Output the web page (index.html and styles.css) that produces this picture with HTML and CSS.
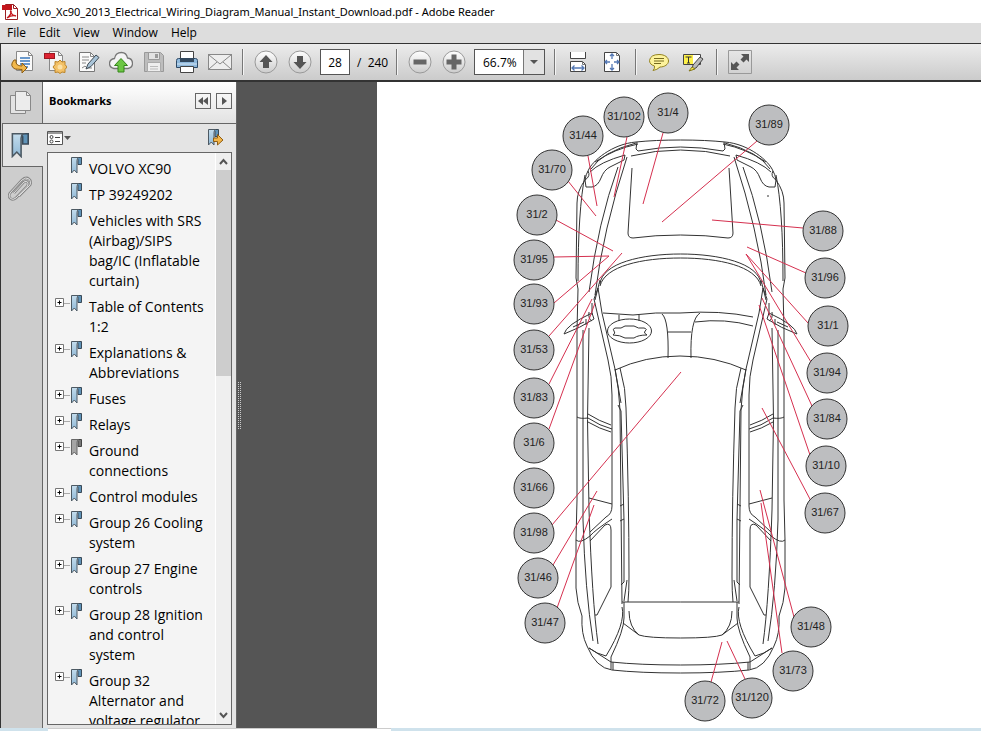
FILE: index.html
```html
<!DOCTYPE html>
<html lang="en">
<head>
  <meta charset="UTF-8">
  <title>Volvo_Xc90_2013_Electrical_Wiring_Diagram_Manual_Instant_Download.pdf - Adobe Reader</title>
  <meta name="viewport" content="width=device-width, initial-scale=1.0">
  <link rel="stylesheet" href="styles.css">
</head>
<body>
  <!-- shared shapes -->
  <svg class="defs" aria-hidden="true">
    <defs>
      <linearGradient id="blue" x1="0" y1="0" x2="0" y2="1"><stop offset="0" stop-color="#c4dded"/><stop offset="1" stop-color="#8fb8d6"/></linearGradient>
      <linearGradient id="round" x1="0" y1="0" x2="0" y2="1"><stop offset="0" stop-color="#fff"/><stop offset="1" stop-color="#ccc"/></linearGradient>
      <symbol id="mark" viewBox="0 0 12 17">
        <path d="M6.500 .5h5v7h-3.500v-5z" fill="#5f93b8" stroke="#3a4a58"/>
        <path d="M1.500 .5h7q-1.500 1-1.500 3v12.500l-2.700-3-2.800 3v-14z" fill="url(#blue)" stroke="#4c5963"/>
      </symbol>
      <symbol id="mark-gray" viewBox="0 0 12 17">
        <path d="M6.500 .5h5v7h-3.500v-5z" fill="#777" stroke="#444"/>
        <path d="M1.500 .5h7q-1.500 1-1.500 3v12.500l-2.700-3-2.800 3v-14z" fill="#a5a5a5" stroke="#666"/>
      </symbol>
    </defs>
  </svg>

  <header class="titlebar">
    <svg width="18" height="18" viewBox="0 0 18 18">
      <path d="M4.500 1.500h8l4 4v11h-12z" fill="#fff" stroke="#9a2024"/>
      <path d="M12.500 1.500v4h4" fill="none" stroke="#9a2024"/>
      <path d="M1 2h10v5H1z" fill="#c3161c"/>
      <path d="M6 15c3-2 5-6 4-7s-1 4 5 5c-3-1-6 0-9 2z" fill="none" stroke="#c3161c" stroke-width="1.300"/>
    </svg>
    <h1>Volvo_Xc90_2013_Electrical_Wiring_Diagram_Manual_Instant_Download.pdf - Adobe Reader</h1>
  </header>

  <nav class="menubar">
    <button>File</button>
    <button>Edit</button>
    <button>View</button>
    <button>Window</button>
    <button>Help</button>
  </nav>

  <div class="toolbar">
    <button aria-label="Open"><svg width="24" height="24" viewBox="0 0 24 24">
      <path d="M6.500 1.500h12l4 4v15h-16z" fill="#fafafa" stroke="#888"/><path d="M18.500 1.500v4h4" fill="none" stroke="#888"/>
      <path d="M10 8h10M10 11h10M10 14h10M10 17h8" stroke="#3b79bd" stroke-width="1.500"/>
      <path d="M4 10q-5 6 1 9l7 .5v3.500l5-5-5-5v3q-7 0-6-6z" fill="#f2b84b" stroke="#8c5d13"/></svg></button>
    <button aria-label="Create PDF"><svg width="24" height="24" viewBox="0 0 24 24">
      <path d="M6.500 1.500h9l4 4v15h-13z" fill="#f5f5f5" stroke="#888"/><path d="M15.500 1.500v4h4" fill="none" stroke="#888"/>
      <rect x="1.500" y="3.500" width="10" height="5" fill="#dc2332" stroke="#9c1820"/>
      <path d="M17 10l2 2 3-.5v3l2 2.500-2 2.500v3l-3-.5-2 1.500-2-1.500-3 .5v-3l-2-2.500 2-2.500v-3l3 .5z" fill="#f3c167" stroke="#bb8429"/><circle cx="17" cy="17" r="2.500" fill="#fbe0a5"/></svg></button>
    <button aria-label="Sign"><svg width="24" height="24" viewBox="0 0 24 24">
      <path d="M3.500 2.500h11l4 4v15h-15z" fill="#fafafa" stroke="#777"/><path d="M14.500 2.500v4h4" fill="none" stroke="#888"/>
      <path d="M6 7h7M6 10h7M6 13h4M6 18l3-2 2 2h5" fill="none" stroke="#888"/>
      <path d="M10 19l2-5 8-9 3 2.500-8 9z" fill="#a9c4d8" stroke="#3e4a54"/></svg></button>
    <button aria-label="Upload"><svg width="24" height="24" viewBox="0 0 24 24">
      <path d="M5 18.500q-4.500-1-4.500-5t5-5q1-6 7-6 5 0 6 5.500 5 .5 5 5.500 0 4-4.500 5z" fill="#f4f4f4" stroke="#777" stroke-width="1.300"/>
      <path d="M12 8.500l6.500 7h-3.500v6.500h-6v-6.500H5.500z" fill="#6cc644" stroke="#34851a"/></svg></button>
    <button aria-label="Save" disabled><svg width="24" height="24" viewBox="0 0 24 24">
      <path d="M2.500 2.500h16l3 3v16h-19z" fill="#bdbdbd" stroke="#999"/><path d="M6.500 2.500h11v7h-11z" fill="#e2e2e2" stroke="#999"/><path d="M13 4h3v4h-3z" fill="#999"/>
      <path d="M5.500 12.500h13v9h-13z" fill="#eee" stroke="#aaa"/><path d="M8 16.500h8M8 19h8" stroke="#bbb"/></svg></button>
    <button aria-label="Print"><svg width="24" height="24" viewBox="0 0 24 24">
      <path d="M5.500 1.500h13v9h-13z" fill="#fff" stroke="#444"/>
      <path d="M3.500 8.500h17q2 0 2 2v7h-21v-7q0-2 2-2z" fill="#8eb8dc" stroke="#2e4a66"/><path d="M5 8h14v4H5z" fill="#32485e"/>
      <path d="M2 14h20" stroke="#d5e7f5"/><path d="M5.500 16.500h13v6h-13z" fill="#fff" stroke="#444"/></svg></button>
    <button aria-label="E-mail"><svg width="26" height="24" viewBox="0 0 26 24">
      <rect x="1.500" y="4.500" width="23" height="15" fill="#eee" stroke="#888"/><path d="M2 5l11 9 11-9M2 19l8-7M24 19l-8-7" fill="none" stroke="#888"/></svg></button>
    <span class="sep"></span>
    <button class="wide" aria-label="Previous page"><svg width="24" height="24" viewBox="0 0 24 24">
      <circle cx="12" cy="12" r="11" fill="url(#round)" stroke="#999"/><path d="M12 5l6.500 7H15v6H9v-6H5.500z" fill="#555"/></svg></button>
    <button class="wide" aria-label="Next page"><svg width="24" height="24" viewBox="0 0 24 24">
      <circle cx="12" cy="12" r="11" fill="url(#round)" stroke="#999"/><path d="M12 19l6.500-7H15V6H9v6H5.500z" fill="#555"/></svg></button>
    <input class="page-number" type="text" value="28" aria-label="Page number">
    <span class="page-count">/&nbsp; 240</span>
    <span class="sep"></span>
    <button class="wide" aria-label="Zoom out"><svg width="24" height="24" viewBox="0 0 24 24">
      <circle cx="12" cy="12" r="11" fill="url(#round)" stroke="#999"/><path d="M5.500 9.500h13v5h-13z" fill="#666"/></svg></button>
    <button class="wide" aria-label="Zoom in"><svg width="24" height="24" viewBox="0 0 24 24">
      <circle cx="12" cy="12" r="11" fill="url(#round)" stroke="#999"/><path d="M9.500 4.500h5v5h5v5h-5v5h-5v-5h-5v-5h5z" fill="#666"/></svg></button>
    <div class="zoom">
      <select aria-label="Zoom"><option>66.7%</option></select>
      <span class="arrow"><svg width="8" height="4" viewBox="0 0 8 4"><path d="M0 0h8l-4 4z" fill="#555"/></svg></span>
    </div>
    <span class="sep gap"></span>
    <button class="wide" aria-label="Fit width"><svg width="20" height="22" viewBox="0 0 20 22">
      <path d="M2.500 1v6.500h15V1M2.500 20.500v-10h12l3 3v7z" fill="#fff" stroke="#444"/><path d="M14.500 10.500v3h3" fill="none" stroke="#777"/>
      <path d="M4 17h12M6.500 14.500L4 17l2.500 2.500M13.500 14.500L16 17l-2.500 2.500" fill="none" stroke="#5478b4" stroke-width="1.300"/></svg></button>
    <button class="wide" aria-label="Fit page"><svg width="20" height="22" viewBox="0 0 20 22">
      <path d="M2.500 1.500h12l3 3v16h-15z" fill="#fff" stroke="#444"/><path d="M14.500 1.500v3h3" fill="none" stroke="#777"/>
      <path d="M10 3v5M10 13v6M8 5l2-2 2 2M8 17l2 2 2-2M3 11h5M12 11h5M5 9l-2 2 2 2M15 9l2 2-2 2" fill="none" stroke="#5478b4" stroke-width="1.300"/></svg></button>
    <span class="sep"></span>
    <button class="wide" aria-label="Comment"><svg width="22" height="20" viewBox="0 0 22 20">
      <path d="M11 2.500c6 0 9.500 3 9.500 6.500s-4 6-8.500 6q-3 3-7 3.500 2-2 1.500-4.500-5-1.500-5-5.500 1-6 9.500-6z" fill="#fdf39c" stroke="#94831f"/>
      <path d="M6 6.500h10M6 9h10M6 11.500h7" stroke="#75691e"/></svg></button>
    <button class="wide" aria-label="Highlight text"><svg width="22" height="20" viewBox="0 0 22 20">
      <path d="M1.500 2.500h17v10h-17z" fill="#fff" stroke="#444"/><path d="M2 3h9v9H2z" fill="#fdf04a"/><path d="M3.500 5h6M6.500 5v6M5 11h3" stroke="#333"/>
      <path d="M10 17l1-4 7-8 3 2-7 9z" fill="#bbb" stroke="#444"/><path d="M7 19l3-4 3 2z" fill="#fdf04a" stroke="#84771c"/></svg></button>
    <span class="sep"></span>
    <button class="wide" aria-label="Read mode"><svg width="24" height="24" viewBox="0 0 24 24">
      <path d="M.5 .5h23v23H.5z" fill="none" stroke="#999"/>
      <path d="M13 4h8v8l-2.500-2.500-3 3-3-3 3-3zM11 20H3v-8l2.500 2.500 3-3 3 3-3 3z" fill="#555"/></svg></button>
  </div>

  <main>
    <aside class="tabs">
      <button class="tab" aria-label="Pages"><svg width="22" height="26" viewBox="0 0 22 26">
        <path d="M1.500 5.500h15v18h-15z" fill="#e3e3e3" stroke="#888"/><path d="M6.500 1.500h11l4 4v15h-15z" fill="#ececec" stroke="#888"/><path d="M17.500 1.500v4h4" fill="none" stroke="#888"/></svg></button>
      <button class="tab active" aria-label="Bookmarks"><svg width="19" height="25" viewBox="0 0 12 17" preserveAspectRatio="none"><use href="#mark"/></svg></button>
      <button class="tab" aria-label="Attachments"><svg width="24" height="26" viewBox="0 0 24 26">
        <path d="M7 17L17 6q2.500-1.500 3.500 0t0 4L9 22q-3 2.500-5.500.5T3 17L15 4q4-3.500 7-1t1 6L12 20" transform="translate(-1 1)" fill="none" stroke="#888" stroke-width="2.600"/>
        <path d="M7 17L17 6q2.500-1.500 3.500 0t0 4L9 22q-3 2.500-5.500.5T3 17L15 4q4-3.500 7-1t1 6L12 20" transform="translate(-1 1)" fill="none" stroke="#ddd"/></svg></button>
    </aside>

    <section class="panel">
      <div class="panel-head">
        <h2>Bookmarks</h2>
        <button aria-label="Collapse"><svg width="10" height="8" viewBox="0 0 10 8"><path d="M5 0v8L0 4zM10 0v8L5 4z" fill="#555"/></svg></button>
        <button aria-label="Next"><svg width="10" height="8" viewBox="0 0 10 8"><path d="M3 0v8l5-4z" fill="#555"/></svg></button>
      </div>
      <div class="panel-tools">
        <button aria-label="Options"><svg width="24" height="16" viewBox="0 0 24 16">
          <path d="M.5 1.500h15v13H.5z" fill="#fff" stroke="#555"/><path d="M1 2h14v2H1z" fill="#999"/><circle cx="4.500" cy="7" r="1.500" fill="none" stroke="#444"/><circle cx="4.500" cy="11.500" r="1.500" fill="none" stroke="#444"/><path d="M8 7.500h5M8 11.500h5" stroke="#444"/>
          <path d="M17 6h7l-3.500 4z" fill="#555"/></svg></button>
        <button aria-label="Find current bookmark"><svg width="17" height="18" viewBox="0 0 17 18">
          <use href="#mark" width="12" height="17"/><path d="M6.500 9h4V5.500L16 11l-5.500 5v-3.500h-4z" fill="#f2b54a" stroke="#8f5e14"/></svg></button>
      </div>
      <div class="tree">
        <ul id="bookmarkList"></ul>
        <div class="scroll">
          <svg width="15" height="17" viewBox="0 0 15 17"><path d="M4 11l3.500-4 3.500 4" fill="none" stroke="#555" stroke-width="2"/></svg>
          <div class="thumb"></div>
          <svg width="15" height="17" viewBox="0 0 15 17"><path d="M4 6l3.500 4L11 6" fill="none" stroke="#555" stroke-width="2"/></svg>
        </div>
      </div>
    </section>

    <div class="gutter"><span class="grip"></span></div>

    <article class="page">
      <svg class="diagram" width="604" height="646" viewBox="377 82 604 646">
        <g class="car">
          <!-- half of the body, mirrored below -->
          <g id="half">
            <path d="M680.500 140Q655 140 636 142C612 144 592 161 588 171Q586 174 585 180Q577 191 577 203L576 278L578 289L577 330V500L576 540V588Q577 603 582 616Q581 634 587 646Q596 668 612 670Q640 673 680.500 673"/>
            <path d="M585 175Q578 210 578 281M588 171Q591 176 585 180L586 187H592Q598 186 601 178Q604 170 610 167L624 160L625 155Q600 162 590 172M636 143Q602 152 591 169M638 144Q614 149 595 162M637 142L636 149L638 151Q660 147 680.500 147M631 156Q655 150 680.500 150"/>
            <path d="M618 167Q598 222 589 292M627 157Q603 230 595 295M632 168L628 233Q628 238 633 238Q655 235 680.500 235"/>
            <path d="M600 284C602 263 642 254 680.500 254M600 286C605 266 642 258 680.500 258M598 288L602 313L615 369Q619 388 620 410L622 604M598 288L594 299L608 360Q612 376 612 395V506Q612 514 606 517L590 532M600 280L595 300"/>
            <path d="M615 369L621 403M620 368Q626 389 626 408Q629 500 629 577Q629 592 628 602M618 405L621 411L624 520V582L621 585M627 580L624 601M620 506L624 504M620 521L624 519"/>
            <path d="M583 330V520Q585 590 593 641M589 328Q586 420 589 510Q592 600 598 644M588 414Q599 421 611 425M588 418Q600 426 612 429M588 422Q600 429 611 432M577 417Q580 419 588 418"/>
            <path d="M589 498L612 504M612 519Q595 530 590 536M590 541L605 525Q611 522 611 530V587L597 615H595M576 540Q580 544 590 536"/>
            <path d="M680.500 602H622M622 607Q626 623 606 656Q597 654 589 648L611 662Q640 665 680.500 665M624 602V618Q624 630 611 657V669M613 662V670M623 623L639 635Q647 638 680.500 638M629 611Q629 627 639 635"/>
            <path d="M564 334Q566 325 592 313L594 319Q580 328 564 334M573 327L584 322M589 312Q588 319 592 321M592 303V315M586 319V325"/>
          </g>
          <use href="#half" transform="translate(1361 0) scale(-1 1)"/>
          <path d="M603 313L633 315Q655 312 680 313Q720 310 753 317M662 314Q669 320 668 358M668 332H691M615 370Q645 356 680 356Q715 356 746 370M700 313Q690 319 691 358M695 322Q725 318 753 326M619 315V321M639 315V321M767 196H769"/>
          <ellipse cx="629.500" cy="331" rx="22" ry="12"/>
          <path d="M614 331Q612 329 615 328Q622 329 625 326H634Q638 329 644 328Q648 329 645 331Q643 333 647 335Q638 335 634 338H625Q620 335 613 335Q616 333 614 331"/>
        </g>
        <path class="leads" d="M627 137L614 197M663 133L643 204M757 141L662 222M588 156L597 206M568 181L596 216M556 220L613 251M554 257L609 256M554 303L609 256M549 336L622 253M549 384L592 299M549 429L595 303M552 525L681 372M553 565L597 491M557 608L594 505M803 228L712 220M806 273L747 247M808 323L746 254M811 362L746 254M812 406L762 298M810 455L759 305M811 501L762 408M794 617L760 490M782 653L761 503M711 682L722 642M745 679L727 641"/>
        <g id="nodes"></g>
      </svg>
    </article>
  </main>

  <footer class="taskbar"><span></span></footer>

  <script src="script.js"></script>
</body>
</html>
```
FILE: styles.css
```css
* {
  box-sizing: border-box;
}

body {
  margin: 0;
  height: 100vh;
  display: flex;
  flex-direction: column;
  overflow: hidden;
  background: #fff;
  color: #000;
  font-family: 'Open Sans', 'Noto Sans', sans-serif;
  font-size: 12px;
}

button {
  padding: 0;
  border: none;
  background: none;
  font: inherit;
  color: inherit;
}

svg {
  display: block;
}

.defs {
  position: absolute;
  width: 0;
  height: 0;
}

.titlebar {
  flex: none;
  height: 23px;
  padding-left: 1px;
  display: flex;
  align-items: center;
  gap: 4px;
}

.titlebar h1 {
  margin: 0;
  font-family: 'Noto Sans', sans-serif;
  font-size: 11px;
  font-weight: normal;
  white-space: nowrap;
}

.menubar {
  flex: none;
  height: 20px;
  padding: 0 0 2px 7px;
  display: flex;
  align-items: center;
  gap: 13px;
  background: #ddd;
}

.toolbar {
  flex: none;
  height: 39px;
  padding-left: 4px;
  display: flex;
  align-items: center;
  background: linear-gradient(#ececec, #cbcbcb);
  border: 1px solid #333;
  border-width: 1px 0 2px 1px;
}

.toolbar button {
  width: 33px;
  display: flex;
  justify-content: center;
}

.toolbar button.wide {
  width: 34px;
}

.sep {
  width: 2px;
  height: 26px;
  margin: 0 5px 0 6px;
  background: #777;
  border-right: 1px solid #f4f4f4;
}

.sep.gap {
  margin-left: 9px;
}

.page-number {
  width: 30px;
  height: 26px;
  margin-left: 3px;
  padding: 0;
  border: 1px solid #555;
  background: #fff;
  font: inherit;
  text-align: center;
}

.page-count {
  width: 40px;
  padding-left: 7px;
  white-space: nowrap;
}

.zoom {
  width: 71px;
  height: 26px;
  margin-left: 3px;
  display: flex;
  border: 1px solid #555;
  background: #fff;
}

.zoom select {
  width: 48px;
  padding: 0 0 0 8px;
  border: none;
  appearance: none;
  background: #fff;
  color: #000;
  font: inherit;
}

.arrow {
  flex: 1;
  display: flex;
  align-items: center;
  justify-content: center;
  border-left: 1px solid #777;
  background: #e2e2e2;
}

main {
  flex: 1;
  min-height: 0;
  display: flex;
  border-left: 1px solid #333;
}

.tabs {
  flex: none;
  width: 42px;
  background: #cdcdcd;
  border-right: 1px solid #666;
}

.tab {
  width: 41px;
  height: 41px;
  padding-right: 4px;
  display: flex;
  align-items: center;
  justify-content: center;
}

.tab.active {
  position: relative;
  width: 41px;
  height: 44px;
  margin-left: 1px;
  padding-right: 8px;
  background: #e4e4e4;
  border: 1px solid #666;
  border-right: none;
}

.panel {
  flex: none;
  width: 194px;
  display: flex;
  flex-direction: column;
  background: #e4e4e4;
  border-right: 1px solid #666;
}

.panel-head {
  height: 42px;
  padding: 0 4px 4px 6px;
  display: flex;
  align-items: center;
  gap: 5px;
  background: linear-gradient(#fff, #e2e2e2);
  border-bottom: 1px solid #666;
}

.panel-head h2 {
  flex: 1;
  margin: 0;
  font-size: 11px;
}

.panel-head button {
  width: 16px;
  height: 16px;
  padding: 3px 2px;
  border: 1px solid #666;
}

.panel-tools {
  height: 28px;
  padding: 0 12px 0 4px;
  display: flex;
  align-items: center;
  justify-content: space-between;
}

.tree {
  flex: 1;
  min-height: 0;
  margin: 0 4px 3px;
  display: flex;
  overflow: hidden;
  background: #f4f4f4;
  border: 1px solid #666;
}

.tree ul {
  flex: 1;
  margin: 0;
  padding: 4px 0 0 7px;
  list-style: none;
  font-size: 14px;
  line-height: 20px;
}

.tree li {
  display: flex;
  align-items: flex-start;
  margin-bottom: 4px;
}

.tree li a {
  margin-left: 7px;
  padding-top: 2px;
  color: #000;
  text-decoration: none;
  white-space: nowrap;
}

.expand {
  width: 15px;
  height: 17px;
}

.scroll {
  width: 16px;
  display: flex;
  flex-direction: column;
  background: #efefef;
  border-left: 1px solid #fff;
}

.thumb {
  height: 206px;
  margin-bottom: auto;
  background: #cdcdcd;
}

.gutter {
  flex: none;
  width: 140px;
  display: flex;
  align-items: center;
  background: #555;
}

.grip {
  width: 4px;
  height: 48px;
  margin-left: 1px;
  background: repeating-linear-gradient(#555 0 1px, transparent 1px 2px), repeating-linear-gradient(90deg, #ccc 0 1px, #555 1px 2px);
}

.page {
  flex: 1;
  background: #fff;
}

.car {
  fill: none;
  stroke: #333;
  stroke-width: 1;
}

.leads {
  fill: none;
  stroke: #d5304f;
  stroke-width: 1;
}

#nodes circle {
  fill: #bdbec0;
  stroke: #333;
}

#nodes text {
  font: 11px 'Liberation Sans', Arial, sans-serif;
  fill: #222;
  text-anchor: middle;
}

.taskbar {
  flex: none;
  height: 3px;
  padding-left: 48px;
  background: #cfe2ec;
}

.taskbar span {
  display: block;
  width: 343px;
  height: 3px;
  background: #fff;
  border-top: 1px solid #ccc;
}
```
FILE: script.js
```javascript
// [label, can expand, gray icon]
const bookmarks = [
  ["VOLVO XC90", false],
  ["TP 39249202", false],
  ["Vehicles with SRS<br>(Airbag)/SIPS<br>bag/IC (Inflatable<br>curtain)", false],
  ["Table of Contents<br>1:2", true],
  ["Explanations &amp;<br>Abbreviations", true],
  ["Fuses", true],
  ["Relays", true],
  ["Ground<br>connections", true, true],
  ["Control modules", true],
  ["Group 26 Cooling<br>system", true],
  ["Group 27 Engine<br>controls", true],
  ["Group 28 Ignition<br>and control<br>system", true],
  ["Group 32<br>Alternator and<br>voltage regulator", true]
];

const plus = '<svg width="15" height="17" viewBox="0 0 15 17"><path d="M.5 3.500h8v8h-8z" fill="#fff" stroke="#777"/><path d="M2.500 7.500h4M4.500 5.500v4" stroke="#000"/><path d="M9 8.500h6" stroke="#aaa"/></svg>';

document.getElementById("bookmarkList").innerHTML = bookmarks.map(([label, expand, gray]) => `
  <li>
    ${expand ? `<button class="expand" aria-label="Expand">${plus}</button>` : '<span class="expand"></span>'}
    <svg width="12" height="17"><use href="#${gray ? "mark-gray" : "mark"}"/></svg>
    <a href="#">${label}</a>
  </li>`).join("");

// component numbers round the car
const nodes = [
  [102, 624, 117], [4, 668, 113], [89, 769, 125], [44, 583, 136], [70, 552, 170],
  [2, 537, 215], [95, 534, 260], [93, 534, 304], [53, 534, 350], [83, 534, 398],
  [6, 534, 443], [66, 534, 488], [98, 534, 533], [46, 538, 578], [47, 545, 623],
  [88, 823, 231], [96, 825, 278], [1, 828, 326], [94, 827, 373], [84, 827, 419],
  [10, 826, 466], [67, 825, 513], [48, 811, 627], [73, 793, 671], [72, 705, 701],
  [120, 752, 698]
];

document.getElementById("nodes").innerHTML = nodes.map(([id, x, y]) =>
  `<circle cx="${x}" cy="${y}" r="20"/><text x="${x}" y="${y + 3}">31/${id}</text>`
).join("");
```
